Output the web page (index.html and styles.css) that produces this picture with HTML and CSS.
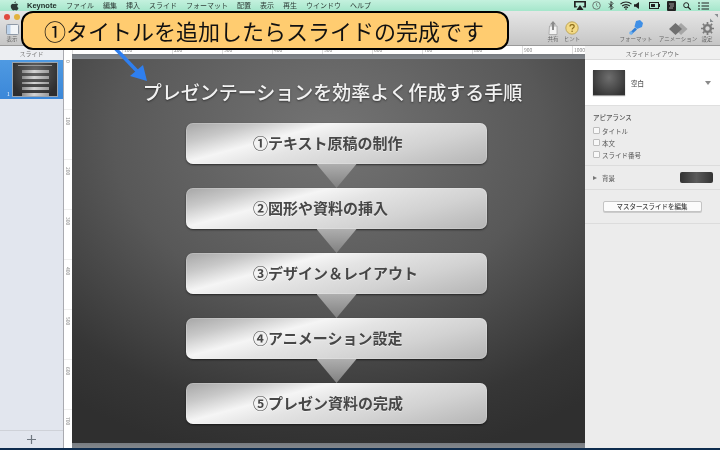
FILE: index.html
```html
<!DOCTYPE html>
<html lang="ja">
<head>
<meta charset="utf-8">
<title>Keynote</title>
<link rel="stylesheet" href="styles.css">
</head>
<body>
<div class="app">
  <header class="menubar">
    <svg class="apple" width="9" height="10" viewBox="0 0 18 20"><path d="M12 1c0 2-1.500 3.500-3.300 3.500C8.600 2.700 10.200 1 12 1zM9 6c1 0 2-.8 3.500-.8 1.500 0 3 .8 3.800 2-2.800 1.700-2.300 5.500.7 6.700-.9 2.300-2.500 5-4.200 5-1.200 0-1.700-.8-3.100-.8s-2 .8-3.100.8C4.600 19 1.500 14.500 1.500 10.500 1.500 7.300 3.700 5.300 6 5.300 7.200 5.300 8 6 9 6z" fill="#2c3a36"/></svg>
    <span class="menu-app">Keynote</span>
    <span class="menu-item m1">ファイル</span>
    <span class="menu-item">編集</span>
    <span class="menu-item">挿入</span>
    <span class="menu-item">スライド</span>
    <span class="menu-item">フォーマット</span>
    <span class="menu-item">配置</span>
    <span class="menu-item">表示</span>
    <span class="menu-item">再生</span>
    <span class="menu-item">ウインドウ</span>
    <span class="menu-item">ヘルプ</span>
    <div class="status">
      <svg width="12" height="9" viewBox="0 0 12 9"><path d="M0 0h12v6.500H9.500L8.500 5.200h1.800V1.500H1.700v3.700h1.800L2.500 6.500H0z" fill="#222"/><path d="M6 4l3.500 5h-7z" fill="#222"/></svg>
      <svg class="s-clock" width="9" height="9" viewBox="0 0 9 9"><circle cx="4.500" cy="4.500" r="3.800" fill="none" stroke="#6c7a74"/><path d="M4.500 2.200v2.500l1.600 1" fill="none" stroke="#6c7a74" stroke-width=".8"/></svg>
      <svg width="6" height="9" viewBox="0 0 6 9"><path d="M1 2.500l4 4-2 2V.5l2 2-4 4" fill="none" stroke="#222" stroke-width=".9"/></svg>
      <svg class="s-wifi" width="12" height="9" viewBox="0 0 12 9"><path d="M.5 3.200c3-2.900 8-2.900 11 0M2.200 5c2-1.900 5.600-1.900 7.600 0M4 6.700c1.100-.9 2.900-.9 4 0" fill="none" stroke="#222" stroke-width="1.100"/><circle cx="6" cy="8.100" r=".8" fill="#222"/></svg>
      <svg class="s-vol" width="5" height="7" viewBox="0 0 5 7"><path d="M0 2.300h1.800L5 0v7L1.800 4.700H0z" fill="#222"/></svg>
      <svg width="11" height="7" viewBox="0 0 11 7"><rect x=".5" y=".5" width="9" height="6" fill="none" stroke="#222"/><rect x="2" y="2" width="4" height="3" fill="#222"/><rect x="10" y="2" width="1" height="3" fill="#222"/></svg>
      <svg width="9" height="10" viewBox="0 0 9 10"><rect width="9" height="10" rx="1" fill="#222"/><path d="M2 3h5M3 5h4M2 7h4" stroke="#bbb" stroke-width=".8"/></svg>
      <svg width="8" height="8" viewBox="0 0 8 8"><circle cx="3.200" cy="3.200" r="2.500" fill="none" stroke="#222"/><path d="M5 5l2.700 2.700" stroke="#222" stroke-width="1.200"/></svg>
      <svg width="11" height="8" viewBox="0 0 11 8"><path d="M0 1h2M3.500 1H11M0 4h2M3.500 4H11M0 7h2M3.500 7H11" stroke="#222" stroke-width="1.200"/></svg>
    </div>
  </header>

  <section class="toolbar">
    <div class="traffic">
      <i class="light red"></i><i class="light yellow"></i>
    </div>
    <div class="tool tool-view">
      <svg width="13" height="11" viewBox="0 0 13 11"><rect x=".5" y=".5" width="12" height="10" rx="1" fill="#f2f5f8" stroke="#8f99a6"/><rect x="1" y="1" width="3.500" height="9" fill="#bcd2ea"/></svg>
      <span>表示</span>
    </div>
    <div class="tools-right">
      <div class="tool w19">
        <svg width="10" height="14" viewBox="0 0 10 14"><path d="M1.500 5H9v8.500H1z" fill="#f4f4f4" stroke="#999" stroke-width=".7"/><path d="M5 0l3 3.400H6V9H4V3.400H2z" fill="#8b8b8b"/></svg>
        <span>共有</span>
      </div>
      <div class="tool w19">
        <svg width="14" height="14" viewBox="0 0 14 14"><circle cx="7" cy="7" r="6.200" fill="#f3da86" stroke="#b49a4a" stroke-width=".8"/><path d="M5 5.400c0-2.400 4.200-2.400 4.200 0 0 1.600-2.100 1.500-2.100 3" fill="none" stroke="#8a6a16" stroke-width="1.100"/><circle cx="7.100" cy="10.300" r=".8" fill="#8a6a16"/></svg>
        <span>ヒント</span>
      </div>
      <div class="tool w46 gap-left">
        <svg width="14" height="15" viewBox="0 0 14 15"><path d="M7 1l4-1 3 3-1 4-5 2-2.500-2.500z" fill="#3f8fe6"/><path d="M6 7.500L1 12.500 2.500 14.500 8 9.500z" fill="#2f7ed6"/><circle cx="2" cy="13" r="1.800" fill="#6fb0ee"/></svg>
        <span>フォーマット</span>
      </div>
      <div class="tool w38">
        <svg width="19" height="12" viewBox="0 0 19 12"><path d="M12 0l6.500 6L12 12 8 8V4z" fill="#a6a6a6"/><path d="M6.500 0L13 6l-6.500 6L0 6z" fill="#707070"/></svg>
        <span>アニメーション</span>
      </div>
      <div class="tool w20">
        <svg width="13" height="13" viewBox="0 0 13 13"><circle cx="6.500" cy="6.500" r="3.400" fill="none" stroke="#7a7a7a" stroke-width="2.400"/><path d="M6.500 0v13M0 6.500h13M1.900 1.900l9.200 9.200M11.100 1.900l-9.200 9.200" stroke="#7a7a7a" stroke-width="1.700" stroke-dasharray="2 9"/></svg>
        <span>設定</span>
      </div>
    </div>
    <svg class="fullscreen" width="8" height="8" viewBox="0 0 8 8"><path d="M8 0v3.500L4.500 0zM0 8V4.500L3.500 8z" fill="#8a8f92"/></svg>
  </section>

  <main class="main">
    <aside class="sidebar">
      <div class="side-head">スライド</div>
      <div class="side-selected">
        <span class="thumb-no">1</span>
        <div class="thumb">
          <div class="mini-title"></div>
          <div class="mini-bar"></div><div class="mini-bar"></div><div class="mini-bar"></div><div class="mini-bar"></div><div class="mini-bar"></div>
        </div>
      </div>
      <div class="side-fill"></div>
      <div class="side-foot">
        <svg width="9" height="9" viewBox="0 0 9 9"><path d="M4.500 0v9M0 4.500h9" stroke="#6f7780" stroke-width="1.200"/></svg>
      </div>
    </aside>

    <section class="center">
      <div class="hruler">
        <span></span><span>100</span><span>200</span><span>300</span><span>400</span><span>500</span><span>600</span><span>700</span><span>800</span><span>900</span><span>1000</span>
      </div>
      <div class="center-row">
        <div class="vruler">
          <span class="v0">0</span><span>100</span><span>200</span><span>300</span><span>400</span><span>500</span><span>600</span><span>700</span>
        </div>
        <div class="stage">
          <div class="band"></div>
          <div class="slide">
            <h1 class="slide-title">プレゼンテーションを効率よく作成する手順</h1>
            <div class="step">①テキスト原稿の制作</div>
            <div class="tri"></div>
            <div class="step">②図形や資料の挿入</div>
            <div class="tri"></div>
            <div class="step">③デザイン＆レイアウト</div>
            <div class="tri"></div>
            <div class="step">④アニメーション設定</div>
            <div class="tri"></div>
            <div class="step">⑤プレゼン資料の完成</div>
          </div>
          <div class="band"></div>
        </div>
      </div>
    </section>

    <aside class="panel">
      <div class="panel-head">スライドレイアウト</div>
      <div class="panel-layout">
        <div class="layout-thumb"></div>
        <span class="layout-name">空白</span>
        <i class="layout-arrow"></i>
      </div>
      <div class="panel-sec appearance">
        <div class="sec-title">アピアランス</div>
        <label class="check"><i></i>タイトル</label>
        <label class="check"><i></i>本文</label>
        <label class="check"><i></i>スライド番号</label>
      </div>
      <div class="panel-sec bg-row">
        <i class="disclosure"></i>
        <span>背景</span>
        <div class="swatch"></div>
      </div>
      <div class="panel-sec btn-row">
        <div class="master-btn">マスタースライドを編集</div>
      </div>
    </aside>
  </main>
  <div class="bottom-line"></div>

  <svg class="arrow" width="50" height="46" viewBox="0 0 50 46"><path d="M7 0L31 25" stroke="#2f7fef" stroke-width="3.500" fill="none"/><path d="M41 35L24 30 37 19z" fill="#2f7fef"/></svg>
  <div class="callout">①タイトルを追加したらスライドの完成です</div>
</div>
</body>
</html>
```

FILE: styles.css
```css
* { box-sizing: border-box; }
html, body { margin: 0; padding: 0; }
body {
  width: 720px;
  height: 450px;
  overflow: hidden;
  font-family: "Noto Sans CJK JP", "Noto Sans", sans-serif;
  color: #444;
}
.app {
  position: relative;
  width: 720px;
  height: 450px;
  display: flex;
  flex-direction: column;
  overflow: hidden;
  background: #ececec;
  filter: blur(0.35px);
}

/* menu bar */
.menubar {
  height: 11px;
  flex: none;
  display: flex;
  align-items: center;
  padding-left: 10px;
  background: linear-gradient(#c4f1de, #a5e6cb);
  font-size: 7px;
  line-height: 11px;
  color: #2f3d38;
}
.apple { flex: none; margin-right: 8px; }
.menu-app { font: bold 7.500px "Liberation Sans", sans-serif; color: #1c2a26; width: 39px; }
.menu-item { margin-right: 9px; letter-spacing: 0; white-space: nowrap; }
.status {
  margin-left: auto;
  display: flex;
  align-items: center;
  gap: 7px;
  padding-right: 11px;
}
.s-clock { margin-left: -1.500px; }
.s-wifi { margin-left: -1px; }
.s-vol { margin: 0 3px 0 -4.500px; }

/* toolbar */
.toolbar {
  height: 35px;
  flex: none;
  display: flex;
  position: relative;
  background: linear-gradient(#e6e6e6, #c6c6c6);
  border-bottom: 1px solid #9a9a9a;
  padding-right: 3px;
}
.traffic { position: absolute; left: 4px; top: 3px; display: flex; gap: 4px; }
.light { width: 6px; height: 6px; border-radius: 50%; display: block; }
.red { background: #e0483e; }
.yellow { background: #e2b23c; }
.tool {
  flex: none;
  display: flex;
  flex-direction: column;
  align-items: center;
  justify-content: flex-end;
  gap: 1px;
  padding-bottom: 2px;
  font-size: 5.500px;
  line-height: 7px;
  color: #666;
  white-space: nowrap;
}
.tool-view { width: 24px; }
.tools-right { margin-left: auto; display: flex; }
.w19 { width: 19px; }
.w20 { width: 20px; }
.w38 { width: 38px; }
.w46 { width: 46px; }
.gap-left { margin-left: 31.500px; }
.fullscreen { position: absolute; right: 2px; top: 3px; }

/* layout */
.main { flex: 1; min-height: 0; display: flex; }
.sidebar {
  width: 64px;
  flex: none;
  display: flex;
  flex-direction: column;
  background: #e2e6ee;
  border-right: 1px solid #a9aab0;
}
.side-head {
  height: 14px;
  flex: none;
  text-align: center;
  font-size: 6px;
  line-height: 15px;
  color: #777;
  background: #eceef2;
}
.side-selected {
  height: 39px;
  flex: none;
  display: flex;
  align-items: flex-end;
  padding: 2px 5px 2px 7px;
  gap: 2px;
  background: linear-gradient(#4f9ae2, #3b87d8);
}
.thumb-no { font-size: 5px; line-height: 7px; color: #fff; width: 3px; }
.thumb {
  width: 46px;
  height: 35px;
  display: flex;
  flex-direction: column;
  align-items: center;
  gap: 3px;
  padding-top: 2px;
  background: radial-gradient(ellipse at 50% 25%, #666, #2e2e2e 80%);
  border: 1px solid #9aa4ae;
}
.mini-title { width: 34px; height: 1px; margin-bottom: 1px; background: #999; }
.mini-bar { width: 27px; height: 3px; background: linear-gradient(100deg, #888, #d4d4d4 45%, #999); }
.side-fill { flex: 1; }
.side-foot {
  height: 18px;
  flex: none;
  display: flex;
  align-items: center;
  justify-content: center;
  border-top: 1px solid #cfd2d8;
}
.center { flex: 1; min-width: 0; display: flex; flex-direction: column; }
.hruler {
  height: 8px;
  flex: none;
  display: flex;
  padding-left: 8px;
  background: #fff;
  overflow: hidden;
}
.hruler span {
  flex: none;
  width: 50px;
  border-left: 1px solid #ddd;
  padding-left: 1px;
  font-size: 5px;
  line-height: 7px;
  color: #8c8c8c;
}
.center-row { flex: 1; min-height: 0; display: flex; }
.vruler {
  width: 8px;
  flex: none;
  background: #fff;
  overflow: hidden;
  display: flex;
  flex-direction: column;
}
.vruler span {
  flex: none;
  height: 50px;
  writing-mode: vertical-rl;
  font-size: 5px;
  line-height: 8px;
  color: #8c8c8c;
  padding-top: 7px;
  border-top: 1px solid #eee;
}
.vruler .v0 { height: 55px; padding-top: 6px; border-top: 0; }
.stage {
  flex: 1;
  min-width: 0;
  display: flex;
  flex-direction: column;
  background: #7c8086;
}
.band { height: 5px; flex: none; background: linear-gradient(#777b80, #84888d); }
.slide {
  flex: 1;
  min-height: 0;
  display: flex;
  flex-direction: column;
  align-items: center;
  padding-left: 16px;
  background: radial-gradient(ellipse 430px 330px at 50% 20%, #747474, #585858 50%, #363636 85%, #2f2f2f);
}
.slide-title {
  margin: 20px 8px 18px 0;
  height: 26px;
  font-size: 19px;
  font-weight: 500;
  line-height: 26px;
  color: #f2f2f2;
  white-space: nowrap;
  text-shadow: 0 1px 2px rgba(0,0,0,.5);
}
.step {
  width: 301px;
  height: 41px;
  flex: none;
  border-radius: 7px;
  padding-left: 67px;
  background: linear-gradient(165deg, #a6a6a6 0%, #c8c8c8 16%, #f5f5f5 32%, #e4e4e4 46%, #d2d2d2 70%, #b4b4b4 100%);
  box-shadow: 0 1px 2px rgba(0,0,0,.55), inset 0 0 0 1px rgba(255,255,255,.18);
  font-size: 15px;
  font-weight: 700;
  line-height: 40px;
  color: #474747;
  text-shadow: 0 1px 0 rgba(255,255,255,.45);
}
.tri {
  width: 40px;
  height: 24px;
  flex: none;
  clip-path: polygon(0 0, 100% 0, 50% 100%);
  background: linear-gradient(#aeaeae, #808080);
}

/* inspector */
.panel {
  width: 135px;
  flex: none;
  display: flex;
  flex-direction: column;
  background: #ececec;
  font-size: 6.500px;
  color: #555;
}
.panel-head {
  height: 14px;
  flex: none;
  text-align: center;
  font-size: 6px;
  line-height: 15px;
  color: #666;
  background: #f0f0f0;
  border-bottom: 1px solid #dcdcdc;
}
.panel-layout {
  height: 46px;
  flex: none;
  display: flex;
  align-items: center;
  padding: 0 8px;
  background: #fff;
  border-bottom: 1px solid #dfdfdf;
}
.layout-thumb {
  width: 32px;
  height: 25px;
  background: radial-gradient(ellipse at 50% 30%, #6e6e6e, #333 85%);
  box-shadow: 0 1px 1px rgba(0,0,0,.4);
}
.layout-name { margin-left: 6px; font-weight: 500; }
.layout-arrow {
  margin-left: auto;
  margin-right: 1px;
  width: 0;
  height: 0;
  border: 3px solid transparent;
  border-top: 4px solid #8a8a8a;
  border-bottom: 0;
}
.panel-sec { flex: none; border-bottom: 1px solid #dcdcdc; }
.appearance {
  height: 60px;
  padding: 7px 8px 0;
  display: flex;
  flex-direction: column;
  gap: 3px;
}
.sec-title { line-height: 9px; margin-bottom: 1px; font-weight: 500; }
.check { display: flex; align-items: center; gap: 2px; height: 9px; }
.check i {
  width: 7px;
  height: 7px;
  border: 1px solid #bdbdbd;
  border-radius: 1px;
  background: #f8f8f8;
}
.bg-row {
  height: 24px;
  display: flex;
  align-items: center;
  padding: 0 8px;
  gap: 5px;
}
.disclosure {
  width: 0;
  height: 0;
  border: 2.500px solid transparent;
  border-left: 4px solid #777;
  border-right: 0;
}
.swatch {
  margin-left: auto;
  margin-right: -1px;
  width: 33px;
  height: 11px;
  border-radius: 2px;
  background: linear-gradient(90deg, #333, #5a5a5a 50%, #333);
}
.btn-row {
  height: 34px;
  display: flex;
  align-items: center;
  justify-content: center;
  padding-right: 1px;
}
.master-btn {
  width: 99px;
  height: 11px;
  border-radius: 2px;
  background: #fbfbfb;
  border: 1px solid #c4c4c4;
  box-shadow: 0 1px 0 #ccc;
  text-align: center;
  font-size: 6.500px;
  line-height: 9px;
  color: #444;
  font-weight: 500;
}
.bottom-line { height: 2px; flex: none; background: #0e2c4e; }

/* overlays */
.callout {
  position: absolute;
  left: 21px;
  top: 11px;
  width: 488px;
  height: 39px;
  padding-right: 2px;
  border: 2px solid #000;
  border-radius: 12px;
  background: #ffcc70;
  text-align: center;
  font-size: 22px;
  line-height: 34px;
  color: #111;
  white-space: nowrap;
  font-weight: 400;
}
.arrow { position: absolute; left: 106px; top: 46px; }
```
